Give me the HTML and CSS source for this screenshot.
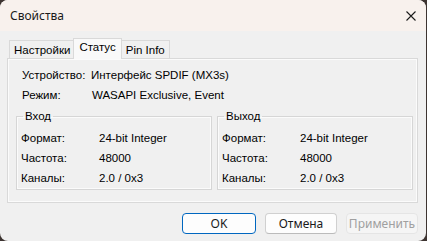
FILE: index.html
```html
<!DOCTYPE html>
<html lang="ru">
<head>
  <meta charset="UTF-8">
  <title>Свойства</title>
  <link rel="stylesheet" href="styles.css">
</head>
<body>

  <div class="window">
    <!-- Заголовок окна -->
    <div class="titlebar">
      <span class="title">Свойства</span>
      <svg class="close" width="10" height="10" viewBox="0 0 10 10">
        <path d="M0.5 0.5 L9.5 9.5 M9.5 0.5 L0.5 9.5" stroke="#1b1b1b" stroke-width="1.1" fill="none"/>
      </svg>
    </div>

    <div class="content">
      <!-- Вкладки -->
      <div class="tabs">
        <div class="tab">Настройки</div>
        <div class="tab active">Статус</div>
        <div class="tab">Pin Info</div>
      </div>

      <div class="panel">
        <div class="row">
          <span class="label">Устройство:</span>
          <span>Интерфейс SPDIF (MX3s)</span>
        </div>
        <div class="row">
          <span class="label">Режим:</span>
          <span class="mode">WASAPI Exclusive, Event</span>
        </div>

        <div class="groups">
          <fieldset class="group">
            <legend>Вход</legend>
            <div class="row"><span class="glabel">Формат:</span><span>24-bit Integer</span></div>
            <div class="row"><span class="glabel">Частота:</span><span>48000</span></div>
            <div class="row"><span class="glabel">Каналы:</span><span>2.0 / 0x3</span></div>
          </fieldset>
          <fieldset class="group">
            <legend>Выход</legend>
            <div class="row"><span class="glabel">Формат:</span><span>24-bit Integer</span></div>
            <div class="row"><span class="glabel">Частота:</span><span>48000</span></div>
            <div class="row"><span class="glabel">Каналы:</span><span>2.0 / 0x3</span></div>
          </fieldset>
        </div>
      </div>

      <!-- Кнопки -->
      <div class="buttons">
        <button class="btn default">OK</button>
        <button class="btn">Отмена</button>
        <button class="btn" disabled>Применить</button>
      </div>
    </div>
  </div>

</body>
</html>
```

FILE: styles.css
```css
/* Общие стили */
body {
  margin: 0;
  background-color: #3d3431;
  font-family: "Liberation Sans", Arial, sans-serif;
}

.window {
  width: 426px;
  height: 241px;
  border-radius: 8px;
  overflow: hidden;
  background-color: #f0f0f0;
  display: flex;
  flex-direction: column;
}

/* Заголовок */
.titlebar {
  height: 31px;
  background-color: #f8f1ed;
  display: flex;
  align-items: center;
  justify-content: space-between;
  padding: 0 10px 0 10px;
  font-family: "Noto Sans", sans-serif;
  font-size: 12px;
  color: #1a1a1a;
}

.content {
  padding: 7px 8px 0 7px;
}

/* Вкладки */
.tabs {
  display: flex;
  align-items: flex-end;
  height: 20px;
  padding-left: 2px;
  font-size: 11.5px;
  position: relative;
  z-index: 1;
}

.tab {
  height: 17px;
  line-height: 18px;
  padding: 0 4px;
  border: 1px solid #d9d9d9;
  border-bottom: none;
  background-color: #f0f0f0;
  margin-right: -1px;
  color: #000;
}

.tab.active {
  height: 20px;
  line-height: 17px;
  padding: 0 5px;
  background-color: #f9f9f9;
  margin: 0 -1px 0 -1px;
  position: relative;
  top: 1px;
}

.panel {
  border: 1px solid #d9d9d9;
  box-shadow: inset 0 0 0 1px #fbfbfb;
  padding: 6px 4px 12px 8px;
  font-size: 11.5px;
  color: #000;
}

.row {
  height: 20px;
  display: flex;
  align-items: center;
  padding-left: 6px;
}

.label {
  width: 69px;
}

.mode {
  margin-left: 1px;
}

.groups {
  display: flex;
  gap: 5px;
  margin-top: 4px;
}

.group {
  flex: 1;
  margin: 0;
  padding: 5px 0 1px 0;
  border: 1px solid #d6d6d6;
  box-shadow: inset 0 0 0 1px #fbfbfb;
}

.group legend {
  margin-left: 6px;
  padding: 0 2px;
  line-height: 14px;
}

.group .row {
  padding-left: 4px;
}

.glabel {
  width: 78px;
}

/* Кнопки */
.buttons {
  display: flex;
  justify-content: flex-end;
  gap: 9px;
  margin-top: 10px;
}

.btn {
  width: 72px;
  height: 21px;
  padding: 0;
  border: 1px solid #d0d0d0;
  border-bottom-color: #bbbbbb;
  border-radius: 4px;
  background-color: #fdfdfd;
  font-family: "Noto Sans", sans-serif;
  font-size: 12px;
  color: #1a1a1a;
}

.btn.default {
  width: 74px;
  border-color: #0067c0;
}

.btn:disabled {
  background-color: #f5f5f5;
  border-color: #e5e5e5;
  color: #a0a0a0;
}
```
